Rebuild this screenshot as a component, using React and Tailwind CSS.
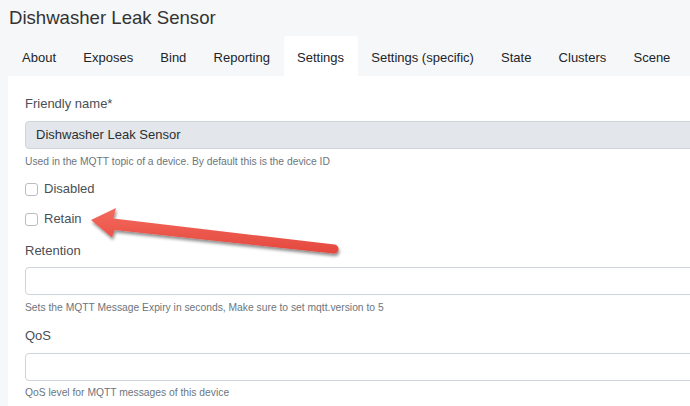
const tabs = ['About', 'Exposes', 'Bind', 'Reporting', 'Settings', 'Settings (specific)', 'State', 'Clusters', 'Scene']

const font = { fontFamily: '"Liberation Sans", Arial, sans-serif' }

const Help = ({ children, className = '' }) => (
  <div className={`text-[10.3px] leading-4 text-[#6c757d] whitespace-nowrap ${className}`}>{children}</div>
)

const Label = ({ children, className = '' }) => (
  <div className={`text-[13px] leading-[18px] text-[#4a4f55] ${className}`}>{children}</div>
)

const Check = ({ label, className = '' }) => (
  <label className={`flex items-center h-[18px] text-[13px] text-[#4a4f55] ${className}`}>
    <span className="w-[13px] h-[13px] rounded-[3px] border border-[#b9bdc2] bg-white mr-[6px]" />
    {label}
  </label>
)

const Arrow = () => (
  <svg className="absolute left-0 top-0 pointer-events-none" width="690" height="406">
    <defs>
      <filter id="sh" x="-10%" y="-50%" width="120%" height="200%">
        <feDropShadow dx="1" dy="2.5" stdDeviation="1.6" floodColor="#000" floodOpacity="0.45" />
      </filter>
      <linearGradient id="rg" x1="0" y1="0" x2="0" y2="1">
        <stop offset="0" stopColor="#f46a5d" />
        <stop offset="1" stopColor="#e4483d" />
      </linearGradient>
    </defs>
    <path
      d="M91,220 L116,208 L113.4,218.6 L334.5,244.5 A4.5,4.5 0 0 1 333.5,253.5 L114.6,230 L112,237.5 Z"
      fill="url(#rg)"
      filter="url(#sh)"
    />
  </svg>
)

export default function App() {
  return (
    <div className="relative w-[690px] h-[406px] overflow-hidden bg-[#f6f7f9]" style={font}>
      <h1 className="pl-[9px] pt-[6px] text-[18.6px] leading-6 text-[#333]">Dishwasher Leak Sensor</h1>

      <div className="flex mt-[6px] ml-[8.5px] h-[40px]">
        {tabs.map((t) => (
          <div
            key={t}
            className={`px-[13.6px] pt-[3px] flex items-center text-[13px] text-[#212529] whitespace-nowrap rounded-t-[3px] ${t === 'Settings' ? 'bg-white' : ''}`}
          >
            {t}
          </div>
        ))}
      </div>

      <div className="ml-[8px] w-[760px] bg-white pl-[17px] pt-[19px] pb-6">
        <Label>Friendly name*</Label>
        <div className="mt-2 h-[28px] rounded-[4px] border border-[#ced4da] bg-[#e3e7ec] flex items-center px-[10px] text-[13px] text-[#2b2f33]">
          Dishwasher Leak Sensor
        </div>
        <Help className="mt-[5px]">Used in the MQTT topic of a device. By default this is the device ID</Help>

        <Check label="Disabled" className="mt-[10px]" />
        <Check label="Retain" className="mt-[12px]" />

        <Label className="mt-[14px]">Retention</Label>
        <div className="mt-[7px] h-[28px] rounded-[4px] border border-[#ced4da] bg-white" />
        <Help className="mt-[5px]">Sets the MQTT Message Expiry in seconds, Make sure to set mqtt.version to 5</Help>

        <Label className="mt-[11px]">QoS</Label>
        <div className="mt-2 h-[28px] rounded-[4px] border border-[#ced4da] bg-white" />
        <Help className="mt-1">QoS level for MQTT messages of this device</Help>
      </div>

      <Arrow />
    </div>
  )
}
